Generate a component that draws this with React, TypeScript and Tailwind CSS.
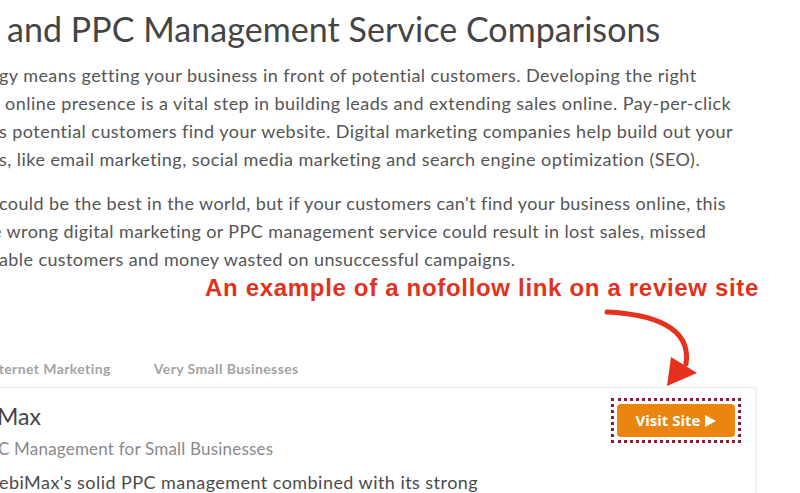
import React from "react";

const bodyLines1 = [
  { text: "gy means getting your business in front of potential customers. Developing the right", shift: "-ml-[1px]" },
  { text: " online presence is a vital step in building leads and extending sales online. Pay-per-click", shift: "ml-0" },
  { text: "s potential customers find your website. Digital marketing companies help build out your", shift: "-ml-[1px]" },
  { text: "s, like email marketing, social media marketing and search engine optimization (SEO).", shift: "-ml-[1px]" },
];

const bodyLines2 = [
  { text: "could be the best in the world, but if your customers can't find your business online, this", shift: "-ml-[1px]" },
  { text: "e wrong digital marketing or PPC management service could result in lost sales, missed", shift: "-ml-[8px]" },
  { text: "able customers and money wasted on unsuccessful campaigns.", shift: "-ml-[1px]" },
];

function CurvedArrow() {
  return (
    <svg
      className="pointer-events-none absolute left-0 top-0"
      width="800"
      height="493"
      viewBox="0 0 800 493"
    >
      <path
        d="M607 312 C 650 314, 692 326, 686 364"
        fill="none"
        stroke="#e8311c"
        strokeWidth="5"
        strokeLinecap="round"
      />
      <polygon points="667,386 671,357 697,373" fill="#e8311c" />
    </svg>
  );
}

export default function App() {
  return (
    <div className="relative h-[493px] w-[800px] overflow-hidden bg-white font-['Lato','Noto_Sans',sans-serif] text-[#4a4a4a]">
      <h1 className="whitespace-nowrap pl-[7px] pt-[9px] text-[34px] leading-[40px] font-normal tracking-[0.05px] text-[#454545]">
        and PPC Management Service Comparisons
      </h1>

      <div className="mt-[12px] text-[18px] leading-[28px] tracking-[0.45px] text-[#555]">
        {bodyLines1.map((l) => (
          <div key={l.text} className={`whitespace-pre ${l.shift}`}>
            {l.text}
          </div>
        ))}
      </div>

      <div className="mt-[16px] text-[18px] leading-[28px] tracking-[0.4px] text-[#555]">
        {bodyLines2.map((l) => (
          <div key={l.text} className={`whitespace-pre ${l.shift}`}>
            {l.text}
          </div>
        ))}
      </div>

      <div className="mt-[1px] whitespace-nowrap pl-[205px] font-['Liberation_Sans',Arial,sans-serif] text-[24px] leading-[28px] font-bold tracking-[0.68px] text-[#e2321d]">
        An example of a nofollow link on a review site
      </div>

      <div className="mt-[57px] flex gap-[43px] whitespace-nowrap text-[14px] leading-[20px] font-bold tracking-[0.4px] text-[#a3a3a3]">
        <span className="-ml-[14px]">Internet Marketing</span>
        <span>Very Small Businesses</span>
      </div>

      <div className="mt-[8px] w-[756px] border-t border-r border-[#ececec] shadow-[2px_0_4px_rgba(0,0,0,0.04)]">
        <div className="flex items-start justify-between">
          <div>
            <div className="-ml-[3px] mt-[14px] whitespace-nowrap text-[23px] leading-[28px] text-[#444]">
              Max
            </div>
            <div className="-ml-[2px] mt-[7px] whitespace-nowrap text-[17px] leading-[24px] tracking-[0.2px] text-[#8a8a8a]">
              C Management for Small Businesses
            </div>
            <div className="-ml-[1px] mt-[9px] whitespace-nowrap text-[18px] leading-[24px] tracking-[0.45px] text-[#4a4a4a]">
              ebiMax's solid PPC management combined with its strong
            </div>
          </div>
          <div className="mr-[14px] mt-[10px] border-[3px] border-dotted border-[#8e1b3a] p-[3px]">
            <button className="flex h-[33px] w-[118px] items-center justify-center gap-[5px] rounded-[4px] bg-[#ea860f] font-['Open_Sans',sans-serif] text-[15px] font-bold text-white">
              <span>Visit Site</span>
              <svg width="11" height="12" viewBox="0 0 11 12">
                <polygon points="0,0 11,6 0,12" fill="#ffffff" />
              </svg>
            </button>
          </div>
        </div>
      </div>

      <CurvedArrow />
    </div>
  );
}
